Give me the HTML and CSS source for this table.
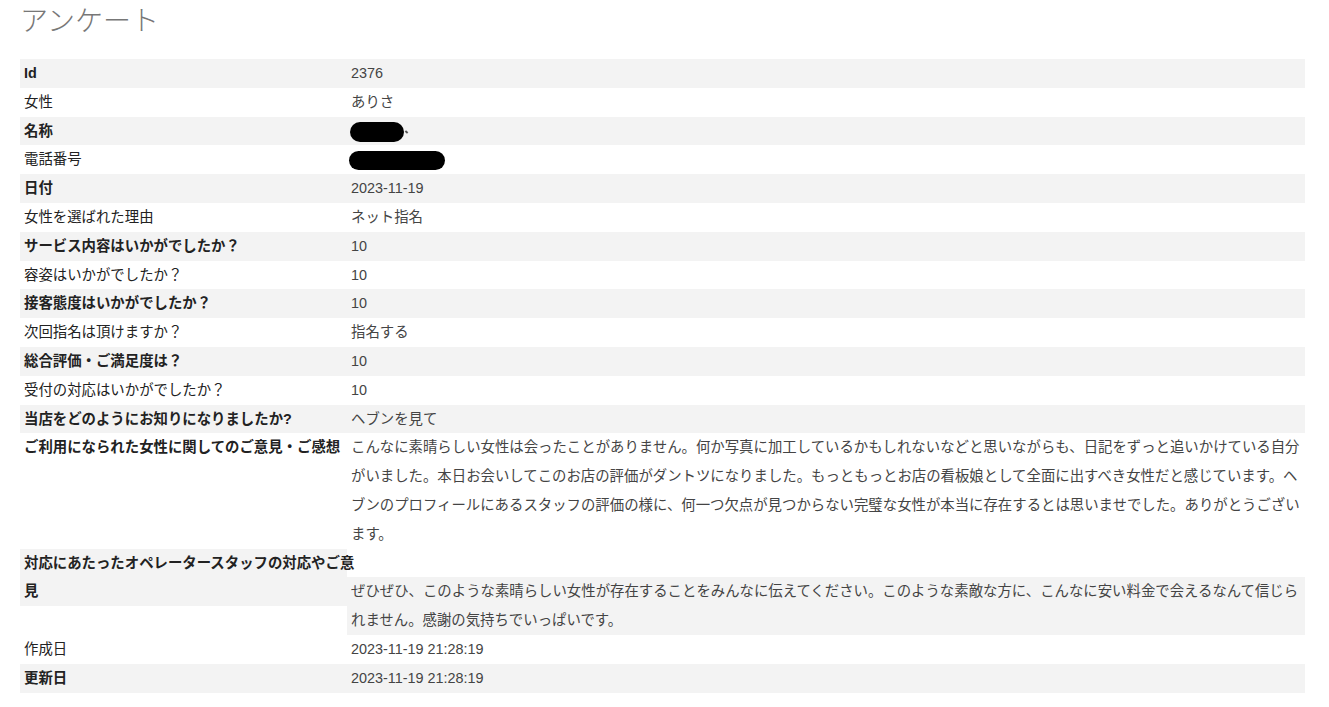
FILE: index.html
```
<!doctype html>
<html>
  <head>
    <meta charset="utf-8">
    <title>アンケート</title>
    <link rel="stylesheet" href="styles.css">
  </head>
  <body>
    <div class="page">
      <h1 class="title">アンケート</h1>

      <dl class="answers">
        <div class="row"><dt>Id</dt><dd>2376</dd></div>
        <div class="row"><dt>女性</dt><dd>ありさ</dd></div>
        <div class="row"><dt>名称</dt><dd><span class="redact redact-name"></span><span class="redact-tail"></span></dd></div>
        <div class="row"><dt>電話番号</dt><dd><span class="redact redact-phone"></span></dd></div>
        <div class="row"><dt>日付</dt><dd>2023-11-19</dd></div>
        <div class="row"><dt>女性を選ばれた理由</dt><dd>ネット指名</dd></div>
        <div class="row"><dt>サービス内容はいかがでしたか？</dt><dd>10</dd></div>
        <div class="row"><dt>容姿はいかがでしたか？</dt><dd>10</dd></div>
        <div class="row"><dt>接客態度はいかがでしたか？</dt><dd>10</dd></div>
        <div class="row"><dt>次回指名は頂けますか？</dt><dd>指名する</dd></div>
        <div class="row"><dt>総合評価・ご満足度は？</dt><dd>10</dd></div>
        <div class="row"><dt>受付の対応はいかがでしたか？</dt><dd>10</dd></div>
        <div class="row"><dt>当店をどのようにお知りになりましたか?</dt><dd>ヘブンを見て</dd></div>
        <div class="row"><dt class="strong">ご利用になられた女性に関してのご意見・ご感想</dt><dd>こんなに素晴らしい女性は会ったことがありません。何か写真に加工しているかもしれないなどと思いながらも、日記をずっと追いかけている自分がいました。本日お会いしてこのお店の評価がダントツになりました。もっともっとお店の看板娘として全面に出すべき女性だと感じています。ヘブンのプロフィールにあるスタッフの評価の様に、何一つ欠点が見つからない完璧な女性が本当に存在するとは思いませでした。ありがとうございます。</dd></div>
        <div class="row row-long"><dt>対応にあたったオペレータースタッフの対応やご意<br>見</dt><dd>ぜひぜひ、このような素晴らしい女性が存在することをみんなに伝えてください。このような素敵な方に、こんなに安い料金で会えるなんて信じられません。感謝の気持ちでいっぱいです。</dd></div>
        <div class="row"><dt>作成日</dt><dd>2023-11-19 21:28:19</dd></div>
        <div class="row"><dt>更新日</dt><dd>2023-11-19 21:28:19</dd></div>
      </dl>
    </div>
  </body>
</html>
```

FILE: styles.css
```
body {
  background: #fff;
  color: #333;
  font: 14.4px/28.8px "Liberation Sans", "Noto Sans CJK JP", sans-serif;
  margin: 0;
  padding: 0;
}

.page {
  padding: 0 24px 0 20px;
}

.title {
  color: #777;
  font-size: 28px;
  font-weight: 300;
  line-height: 36px;
  margin: 4px 0 19px;
}

.answers {
  margin: 0;
}

.row {
  display: flex;
  align-items: flex-start;
}

dt {
  color: #222;
  flex: 0 0 327px;
  min-width: 0;
  box-sizing: border-box;
  padding: 0 0 0 4px;
  white-space: nowrap;
}

dd {
  flex: 1;
  min-width: 0;
  margin: 0;
  padding: 0 0 0 4px;
  color: #444;
}

.row:nth-child(odd) dt,
.row:nth-child(odd) dd {
  background: #f3f3f3;
}

.row:nth-child(odd) dt,
dt.strong {
  font-weight: bold;
}

.row-long dd {
  margin-top: 28.8px;
}

.redact {
  display: inline-block;
  background: #000;
  border-radius: 10px;
  vertical-align: middle;
}
.redact-name {
  width: 54px;
  height: 20px;
  margin-left: -1px;
}
.redact-phone {
  width: 96px;
  height: 19px;
  margin-left: -2px;
}
.redact-tail {
  display: inline-block;
  width: 3px;
  height: 2px;
  background: #555;
  margin-left: 1px;
  vertical-align: middle;
  transform: rotate(40deg);
}
```
